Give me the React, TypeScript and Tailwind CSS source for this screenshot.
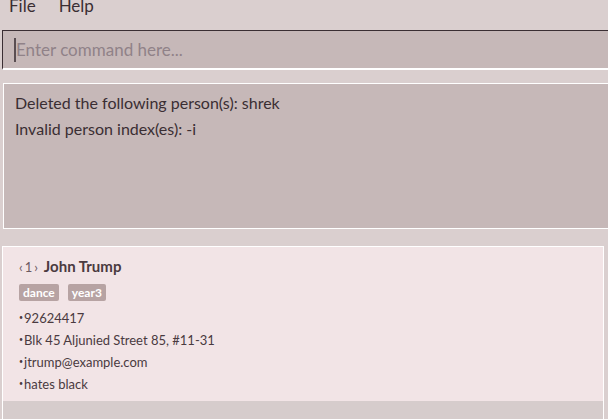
import React from 'react';

const font = { fontFamily: 'Lato, "Open Sans", sans-serif' };

const Tag: React.FC<{ label: string }> = ({ label }) => (
  <span className="rounded-[2px] bg-[#b7a3a3] px-[4px] text-[12px] font-bold leading-[17px] text-white">{label}</span>
);

const Field: React.FC<{ text: string }> = ({ text }) => (
  <span className="flex items-center">
    <span className="mr-[1px] text-[7px] leading-none">•</span>
    {text}
  </span>
);

const PersonCard: React.FC = () => (
  <div className="flex h-[155px] flex-col border-t border-white bg-[#f2e4e6] pl-[16px] pt-[9px] text-[#4a3a40]">
    <div className="flex items-baseline gap-[4px]">
      <span className="text-[13px] tracking-[2px] text-[#6b5a60]">‹1›</span>
      <span className="text-[15px] font-bold leading-[20px] text-[#4a3a40]">John Trump</span>
    </div>
    <div className="mt-[6px] flex gap-[9px]">
      <Tag label="dance" />
      <Tag label="year3" />
    </div>
    <div className="mt-[6px] flex flex-col text-[13px] leading-[22px]">
      <Field text="92624417" />
      <Field text="Blk 45 Aljunied Street 85, #11-31" />
      <Field text="jtrump@example.com" />
      <Field text="hates black" />
    </div>
  </div>
);

export default function App() {
  return (
    <div className="flex h-[419px] w-[608px] flex-col overflow-hidden bg-[#dacfcf]" style={font}>
      {/* menu bar */}
      <div className="flex h-[30px] gap-[23px] pl-[9px] text-[17px] leading-[20px] text-[#3a2e33]">
        <span className="-mt-[4px]">File</span>
        <span className="-mt-[4px]">Help</span>
      </div>

      {/* command box */}
      <div className="ml-[2px] flex h-[40px] items-center border-b-2 border-l border-t border-b-white border-l-[#3a2e33] border-t-[#3a2e33] bg-[#c6b8b8] pl-[11px]">
        <div className="h-[24px] w-[2px] bg-[#5a4e52]" />
        <span className="text-[17px] text-[#908288]">Enter command here...</span>
      </div>

      {/* result display */}
      <div className="ml-[3px] mt-[13px] h-[146px] w-[620px] border border-white bg-[#c6b8b8] pl-[11px] pt-[6px] text-[16px] leading-[26px] text-[#3a2e33]">
        <div>Deleted the following person(s): shrek</div>
        <div>Invalid person index(es): -i</div>
      </div>

      {/* person list */}
      <div className="mt-[17px] flex flex-1">
        <div className="ml-[2px] flex flex-1 flex-col border-x border-white bg-[#d6cccc]">
          <PersonCard />
        </div>
        <div className="w-[4px] bg-[#dacfcf]" />
      </div>
    </div>
  );
}
